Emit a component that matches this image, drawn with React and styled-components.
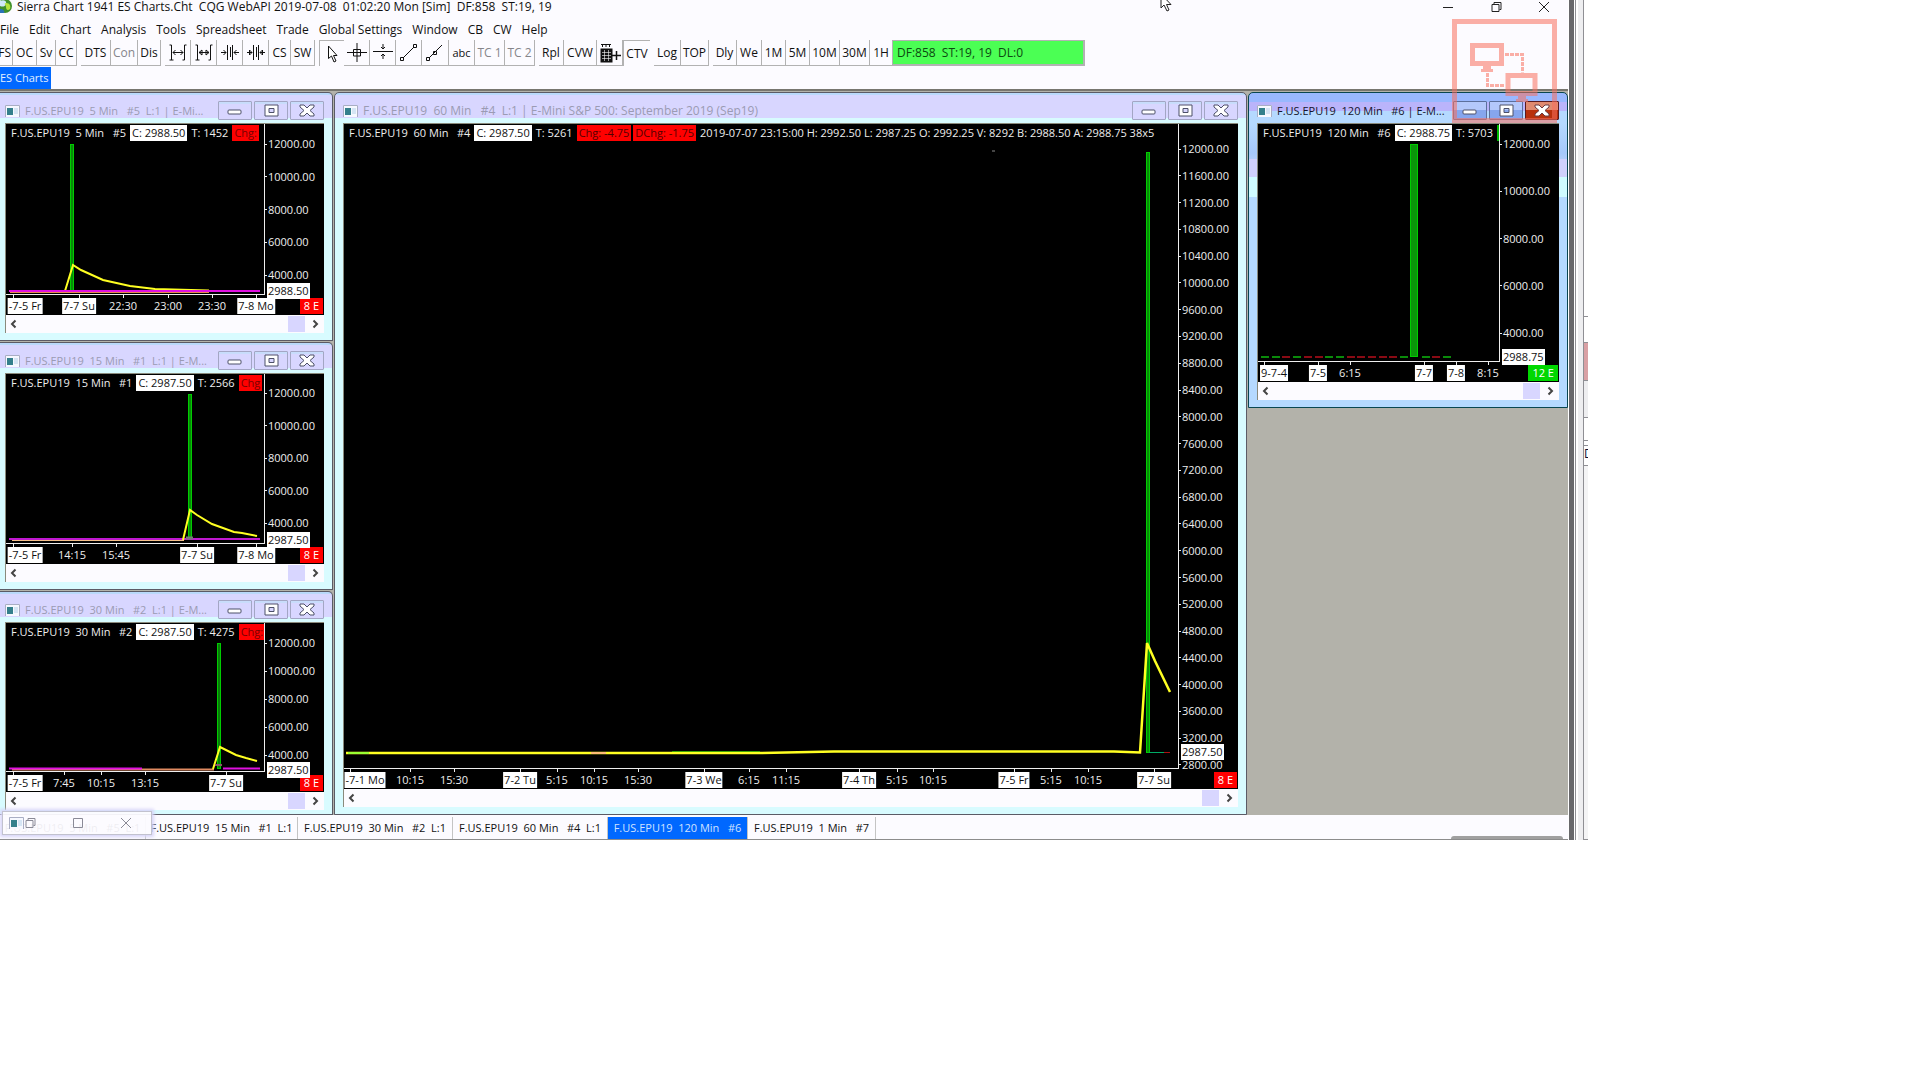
import React from 'react'
import styled, { createGlobalStyle, css } from 'styled-components'

const GlobalStyle = createGlobalStyle`
  * {
    box-sizing: border-box;
  }
  body {
    margin: 0;
    background: #fff;
    color: #111;
    font: 12px/16px 'Open Sans', 'Noto Sans', sans-serif;
  }
  button {
    margin: 0;
    padding: 0;
    border: 0;
    background: none;
    color: inherit;
    font: inherit;
    white-space: pre;
  }
  svg {
    display: block;
    flex: none;
  }
`

const Screen = styled.div`
  display: flex;
  overflow: hidden;
`

const AppWindow = styled.main`
  position: relative;
  flex: 1568 1 0;
  min-width: 0;
  background: #fcfbff;
  border-bottom: 1px solid #8c8c8c;
`

const Blank = styled.div`
  flex: 344 1 0;
`

const TitleBar = styled.header`
  display: flex;
  height: 19px;
  padding-bottom: 5px;
  align-items: center;
  white-space: pre;
`

const AppTitle = styled.h1`
  flex: 1;
  margin: 0 0 0 4px;
  font: inherit;
`

const Caption = styled.button`
  display: flex;
  width: 48px;
  justify-content: center;
`

const Menu = styled.nav`
  display: flex;
  height: 21px;
  align-items: center;
  gap: 10px;
`

const ToolRow = styled.div`
  display: flex;
  height: 27px;
  gap: 4px;
`

const ToolGroup = styled.div`
  display: flex;
  height: 26px;
`

const Tool = styled.button`
  display: flex;
  width: ${p => p.$w}px;
  align-items: center;
  justify-content: center;
  border-right: 1px solid #b2b2b2;
  border-bottom: 1px solid #b2b2b2;
  color: ${p => (p.disabled ? '#85858a' : '#111')};
  ${p => p.$small && css`
    font-size: 11px;
  `}
  ${p => p.$first && css`
    justify-content: flex-end;
    padding-right: 1px;
  `}
  ${p => p.$pressed && css`
    border: 0;
    border-top: 1px solid #b2b2b2;
    border-left: 1px solid #b2b2b2;
  `}
`

const Status = styled.output`
  width: 192px;
  padding: 4px;
  border: solid #b2b2b2;
  border-width: 1px 2px 2px 0;
  background: #4bff54;
  color: #0c4a10;
  white-space: pre;
`

const BookRow = styled.div`
  display: flex;
  height: 22px;
`

const BookTab = styled.button`
  padding: 0 3px 0 0;
  background: #0068ff;
  color: #e4f0ff;
  font-size: 11px;
`

const Workspace = styled.section`
  display: grid;
  grid-template-columns: 333fr 913fr 320fr;
  gap: 1px;
  align-items: start;
  padding-top: 1px;
  border-top: 2px solid #77766f;
  background: #b3b2aa;
`

const Column = styled.div`
  display: grid;
  gap: 1px;
  min-width: 0;
`

const Frame = styled.article`
  min-width: 0;
  padding: 0 8px ${p => p.$foot || 7}px ${p => (p.$cut ? 5 : 8)}px;
  border: 1px solid ${p => (p.$active ? '#0a4650' : '#5b5b66')};
  border-left-width: ${p => (p.$cut ? 0 : 1)}px;
  border-radius: ${p => (p.$cut ? '0 5px 0 0' : '5px 5px 0 0')};
  background: ${p => (p.$active
    ? 'linear-gradient(#99b8ff 9px, #bab4fb 9px 18px, #b5d9ff 18px 30px, #a6c8fa 60px, #b0ccfa 66px, #d0d0fc 66px 84px, #d0fbff 84px 104px, #b5d9ff 104px)'
    : 'linear-gradient(#b9d9fb 2px, #d8d6ff 2px 25px, #d8fbff 25px)')};
`

const FrameTitle = styled.div`
  display: flex;
  height: 31px;
  padding: 8px 0 4px;
  align-items: center;
  gap: 2px;
  color: ${p => (p.$active ? '#15152a' : '#9b9bb3')};
`

const FrameName = styled.h2`
  flex: 1;
  min-width: 0;
  margin: 0 0 0 3px;
  overflow: hidden;
  font: inherit;
  font-size: ${p => (p.$small ? 11 : 12)}px;
  white-space: pre;
`

const FrameButton = styled.button`
  display: flex;
  flex: none;
  width: 34px;
  height: 19px;
  align-items: center;
  justify-content: center;
  border: 1px solid ${p => (p.$close ? '#5a1a20' : p.$active ? '#5c6f9c' : '#a3a6c4')};
  border-radius: 1px;
  background: ${p => (p.$close
    ? 'linear-gradient(#e08a70 8px, #b8300c 8px)'
    : p.$active
      ? 'linear-gradient(#b4c8fb 8px, #86a6ee 8px)'
      : 'linear-gradient(#c8dcfb 2px, #d8d6ff 2px)')};
`

const Client = styled.div`
  border-top: 1px solid #8a8a7c;
  border-left: 1px solid #8a8a7c;
  margin-top: -1px;
  background: #000;
  color: #eee;
  font-size: 11px;
`

const Plot = styled.div`
  display: grid;
  grid-template-columns: minmax(0, 1fr) 60px;
  height: ${p => p.$h}px;
`

const Canvas = styled.div`
  display: flex;
  min-width: 0;
  flex-direction: column;
  border-bottom: 1px solid #eee;
  svg {
    flex: 1;
    width: 100%;
    min-height: 0;
  }
`

const Quote = styled.div`
  display: flex;
  height: 20px;
  padding: 1px 0 3px 3px;
  overflow: hidden;
  white-space: pre;
`

const Tag = styled.span`
  flex: none;
  margin-right: 2px;
  padding: 0 2px;
  background: ${p => p.$bg || 'none'};
  color: ${p => p.$fg || 'inherit'};
`

const PriceAxis = styled.div`
  position: relative;
  height: 100%;
  min-height: 0;
  border-left: 1px solid #eee;
`

const PriceClip = styled.div`
  height: 100%;
  overflow: hidden;
`

const PriceList = styled.ol`
  display: flex;
  height: calc(100% + ${p => p.$over || 0}px);
  margin: 0;
  padding: ${p => p.$top}px 0 ${p => p.$bottom || 0}px;
  flex-direction: column;
  justify-content: space-between;
  list-style: none;
  li {
    display: flex;
    align-items: center;
    gap: 1px;
  }
  li::before {
    content: '';
    width: 2px;
    height: 1px;
    background: #eee;
  }
`

const LastPrice = styled.output`
  position: absolute;
  z-index: 1;
  bottom: ${p => p.$bottom}px;
  left: 2px;
  padding: 0 1px;
  background: #fff;
  color: #111;
`

const TimeAxis = styled.div`
  position: relative;
  display: flex;
  height: 20px;
  justify-content: flex-end;
  padding: 3px 1px 1px 0;
  overflow: hidden;
  white-space: pre;
`

const Time = styled.span`
  position: absolute;
  top: 3px;
  padding: 0 1px;
  background: ${p => (p.$day ? '#fff' : 'none')};
  color: ${p => (p.$day ? '#111' : 'inherit')};
  transform: translateX(-50%);
`

const Tick = styled.i`
  position: absolute;
  top: 0;
  width: 1px;
  height: 3px;
  background: #eee;
`

const Count = styled.span`
  padding: 0 4px;
  background: ${p => p.$bg};
  color: #fff;
`

const Scroll = styled.div`
  display: flex;
  height: 18px;
  padding: 1px 5px 1px 4px;
  align-items: center;
  background: #fcfbff;
`

const Thumb = styled.div`
  width: 17px;
  height: 16px;
  margin: 0 7px 0 auto;
  background: #d8d6ff;
`

const Bottom = styled.footer`
  position: relative;
  display: flex;
  height: 24px;
  padding-top: 2px;
`

const ChartTab = styled.button`
  width: ${p => p.$w}px;
  border-right: 1px solid #c4c4c4;
  background: ${p => (p.$on ? '#0068ff' : 'none')};
  color: ${p => (p.$on ? '#cfe2ff' : '#111')};
  font-size: 11px;
`

const Minimized = styled.div`
  position: absolute;
  top: -4px;
  left: 2px;
  display: flex;
  width: 150px;
  height: 24px;
  align-items: center;
  padding-left: 6px;
  border: 1px solid #c2c2ce;
  background: rgba(252, 251, 255, 0.94);
  box-shadow: 0 0 3px 2px #d8d6f8;
`

const MiniButton = styled.button`
  display: flex;
  width: 48px;
  justify-content: center;
  &:first-of-type {
    width: 12px;
    margin-right: 18px;
  }
`

const Grip = styled.div`
  position: absolute;
  right: 5px;
  bottom: 0;
  width: 112px;
  height: 3px;
  border-radius: 6px 6px 0 0;
  background: #a0a0a0;
`

const Share = styled.svg`
  position: absolute;
  z-index: 2;
  top: 19px;
  right: 11px;
  pointer-events: none;
`

const Pointer = styled.svg`
  position: absolute;
  top: -7px;
  left: 74%;
`

const Edge = styled.aside`
  display: grid;
  width: 20px;
  grid-template-columns: 1px 5px 1px 1px 2px 5px 5px;
`

const Strip = styled.div`
  background: ${p => p.$bg};
`

const Slices = styled.div`
  display: flex;
  flex-direction: column;
  border-left: 1px solid #8f8f94;
  overflow: hidden;
`

const Slice = styled.div`
  height: ${p => p.$h}px;
  flex: ${p => (p.$h ? 'none' : 1)};
  background: ${p => p.$bg || '#fff'};
  border-bottom: 1px solid #8f8f94;
  color: #113;
  font-size: 12px;
`

const Globe = () => (
  <svg width="13" height="14" viewBox="0 0 13 14" aria-hidden="true">
    <circle cx="5" cy="6" r="7" fill="#3f8f2c" />
    <path d="M0 1c4-2 7 0 6 3s-4 3-6 2z" fill="#cfe8f8" />
    <path d="M6 3c4 0 5 3 4 6-2 2-4 1-4-2s-3-3 0-4z" fill="#b4e23c" />
    <path d="M0 9c3 0 5 2 4 4H0z" fill="#2a72b8" />
  </svg>
)

const ChartIcon = () => (
  <svg width="15" height="12" viewBox="0 0 15 12" aria-hidden="true">
    <rect width="15" height="12" fill="#f6f8ff" />
    <path d="M.5 12V.5H14.5V12" fill="none" stroke="#a9aec4" />
    <rect x="2" y="3" width="6" height="7" fill="#34808c" />
    <path d="M9 4h4M9 6h4M9 8h4" stroke="#b4d2ea" />
  </svg>
)

const glyphs = {
  min: <rect x="1" y="7" width="13" height="4" rx="1" />,
  max: <path d="M2 2h13v11H2zM6 5.500h5v4H6z" fillRule="evenodd" />,
  close: <path d="M1 2h4l3 3 3-3h4v2l-4 3.500 4 3.500v2h-4l-3-3-3 3H1v-2l4-3.500L1 4z" />
}

const FrameGlyph = ({ kind, light }) => (
  <svg width="16" height="15" viewBox="0 0 16 15" fill="#fff" stroke={light ? '#6d3a40' : '#4c5068'} aria-hidden="true">
    {glyphs[kind]}
  </svg>
)

const Chevron = ({ back }) => (
  <svg width="7" height="10" viewBox="0 0 7 10" fill="none" stroke="#444" strokeWidth="2" aria-hidden="true">
    <path d={back ? 'M5.500 1.500 2 5l3.500 3.500' : 'M1.500 1.500 5 5 1.500 8.500'} />
  </svg>
)

const captionPaths = {
  Minimize: 'M1 6.500h10',
  Restore: 'M2 3.500h7v7H2zM4 3V1.500h7v7H9.500',
  Maximize: 'M1.500 1.500h9v9h-9z',
  Close: 'M1 1l10 10M11 1 1 11'
}

const CaptionIcon = ({ kind, color = '#222' }) => (
  <svg width="12" height="12" viewBox="0 0 12 12" fill="none" stroke={color} aria-hidden="true">
    <path d={captionPaths[kind]} />
  </svg>
)

const toolPaths = {
  widen: <path d="M3.500 4v15M1.500 19h4M16.500 4v15M14.500 19h2M5 11.500h10M7.500 9 5 11.500 7.500 14M12.500 9l2.500 2.500-2.500 2.500M1.500 4h2M16.500 4h2" />,
  widenBold: <path d="M3.500 4v15M1.500 19h4M16.500 4v15M14.500 19h2M1.500 4h2M16.500 4h2M5 11.500h10M8 9v5l-3-2.500zM12 9v5l3-2.500z" />,
  narrow: <path d="M7.500 4v15M12.500 4v15M10.500 6v10M1 11.500h5M3.500 9 6 11.500 3.500 14M19 11.500h-5M16.500 9 14 11.500l2.500 2.500" />,
  narrowBold: <path d="M7.500 4v15M12.500 4v15M10.500 6v10M1 11.500h5M3.500 9v5L6 11.500zM19 11.500h-5M16.500 9v5L14 11.500z" />,
  cursor: <path d="M6.500 4v12.500l3-2.500 2.500 6 2-1-2.500-5.500h3.500z" fill="#fff" />,
  cross: <path d="M0 11.500h20M10 2v19M6.500 8.500h7v6.500h-7z" />,
  level: <path d="M0 10.500h20M10 3v5M8 6l2 2 2-2M10 18v-5M8 15l2-2 2 2" />,
  line: <path d="M4 17 15 6M1.500 16.500h3v3h-3zM14.500 3.500h3v3h-3z" />,
  ray: <path d="M4 17 17 4M1.500 16.500h3v3h-3zM8.500 10.500h3v3h-3z" />
}

const ToolIcon = ({ kind }) => (
  <svg width="20" height="23" viewBox="0 0 20 23" fill="none" stroke="#111" aria-hidden="true">
    {toolPaths[kind]}
  </svg>
)

const GridIcon = () => (
  <svg width="22" height="22" viewBox="0 0 22 22" fill="none" stroke="#111" aria-hidden="true">
    <path d="M2 2.500h10M3.500 2v3M7 2v3M10.500 2v3" />
    <rect x="2" y="7" width="11" height="13" fill="#111" />
    <path d="M3 10.500h9M3 13.500h9M3 16.500h9M5.500 8v11M9.500 8v11" stroke="#fff" strokeWidth=".6" />
    <path d="M13 13.500h9M17.500 9v9" strokeWidth="1.500" />
  </svg>
)

const toolGroups = [
  [['FS', 13], ['OC', 24], ['Sv', 19], ['CC', 21]],
  [['DTS', 30], ['Con', 27, { disabled: true }], ['Dis', 23]],
  [['widen', 26], ['widenBold', 26], ['narrow', 26], ['narrowBold', 26], ['CS', 22], ['SW', 24]],
  [
    ['cursor', 25, { $pressed: true }], ['cross', 26], ['level', 26], ['line', 26], ['ray', 27],
    ['abc', 26, { $small: true }], ['TC 1', 30, { disabled: true }], ['TC 2', 30, { disabled: true }]
  ],
  [['Rpl', 25], ['CVW', 33], ['grid', 26], ['CTV', 27, { $pressed: true }]],
  [['Log', 27], ['TOP', 28]],
  [['Dly', 24], ['We', 25], ['1M', 24], ['5M', 24], ['10M', 30], ['30M', 30], ['1H', 23]]
]

const menus = ['File', 'Edit', 'Chart', 'Analysis', 'Tools', 'Spreadsheet', 'Trade', 'Global Settings', 'Window', 'CB', 'CW', 'Help']

const RED = '#f00'
const prices = (from, to, step) => {
  const list = []
  for (let p = from; p >= to; p -= step) list.push(`${p}.00`)
  return list
}

// x positions on the time axis are in the units of `width`
const charts = {
  min5: {
    title: 'F.US.EPU19  5 Min   #5  L:1 | E-Mi...',
    cut: true,
    height: 171,
    width: 318,
    quote: [['F.US.EPU19  5 Min   #5'], ['C: 2988.50', '#fff', '#111'], ['T: 1452'], ['Chg:', RED, '#700']],
    prices: prices(12000, 4000, 2000),
    top: 12,
    bottom: 12,
    last: ['2988.50', -4],
    times: [['-7-5 Fr', 19, true, 7], ['7-7 Su', 73, true], ['22:30', 117], ['23:00', 162], ['23:30', 206], ['7-8 Mo', 250, true]],
    count: ['8 E', RED],
    plot: (
      <svg viewBox="0 0 258 150" preserveAspectRatio="none">
        <path d="M4 148.500H203" stroke="#e88a4a" />
        <rect x="64.500" y="0.500" width="3" height="147" fill="#088a08" stroke="#0c0" />
        <path d="M59 147 67 121 75 126 97 136 124 142 149 145 203 146.500" fill="none" stroke="#ff2" strokeWidth="2" />
        <path d="M3 147H254" stroke="#e010e0" strokeWidth="2" />
      </svg>
    )
  },
  min15: {
    title: 'F.US.EPU19  15 Min   #1  L:1 | E-M...',
    cut: true,
    height: 170,
    width: 318,
    quote: [['F.US.EPU19  15 Min   #1'], ['C: 2987.50', '#fff', '#111'], ['T: 2566'], ['Chg', RED, '#700']],
    prices: prices(12000, 4000, 2000),
    top: 11,
    bottom: 13,
    last: ['2987.50', -4],
    times: [['-7-5 Fr', 19, true, 7], ['14:15', 66], ['15:45', 110], ['7-7 Su', 191, true], ['7-8 Mo', 250, true]],
    count: ['8 E', RED],
    plot: (
      <svg viewBox="0 0 258 149" preserveAspectRatio="none">
        <path d="M6 146H178" stroke="#f5c08a" strokeWidth="2" />
        <rect x="182.500" y="0.500" width="3" height="145" fill="#088a08" stroke="#0c0" />
        <path d="M3 145H254" stroke="#c018d0" strokeWidth="2" />
        <path d="M177 146 184 116 191 121 206 130 228 138 236 139 251 142" fill="none" stroke="#ff2" strokeWidth="2" />
        <path d="M180 144H187" stroke="#777" strokeWidth="3" />
      </svg>
    )
  },
  min30: {
    title: 'F.US.EPU19  30 Min   #2  L:1 | E-M...',
    cut: true,
    foot: 4,
    height: 149,
    width: 318,
    quote: [['F.US.EPU19  30 Min   #2'], ['C: 2987.50', '#fff', '#111'], ['T: 4275'], ['Chg:', RED, '#700']],
    prices: prices(12000, 4000, 2000),
    top: 12,
    bottom: 9,
    last: ['2987.50', -6],
    times: [['-7-5 Fr', 19, true, 7], ['7:45', 58], ['10:15', 95], ['13:15', 139], ['7-7 Su', 220, true]],
    count: ['8 E', RED],
    plot: (
      <svg viewBox="0 0 258 128" preserveAspectRatio="none">
        <path d="M6 126.500H208" stroke="#e08a60" strokeWidth="2" />
        <rect x="211.500" y="0.500" width="3" height="125" fill="#0a7a0a" stroke="#0c0" />
        <path d="M3 125.500H136M217 125.500H254" stroke="#e010e0" strokeWidth="2" />
        <path d="M207 126 214 104 230 112 240 115 251 118" fill="none" stroke="#ff2" strokeWidth="2" />
        <path d="M209 122H216" stroke="#856" strokeWidth="2" />
      </svg>
    )
  },
  min60: {
    title: 'F.US.EPU19  60 Min   #4  L:1 | E-Mini S&P 500: September 2019 (Sep19)',
    height: 645,
    width: 894,
    quote: [
      ['F.US.EPU19  60 Min   #4'], ['C: 2987.50', '#fff', '#111'], ['T: 5261'], ['Chg: -4.75', RED, '#500'], ['DChg: -1.75', RED, '#500'],
      ['2019-07-07 23:15:00 H: 2992.50 L: 2987.25 O: 2992.25 V: 8292 B: 2988.50 A: 2988.75 38x5']
    ],
    prices: prices(12000, 2800, 400),
    top: 17,
    over: 4,
    last: ['2987.50', 9],
    times: [
      ['-7-1 Mo', 21, true, 6], ['10:15', 66], ['15:30', 110], ['7-2 Tu', 176, true], ['5:15', 213], ['10:15', 250],
      ['15:30', 294], ['7-3 We', 360, true], ['6:15', 405], ['11:15', 442], ['7-4 Th', 515, true], ['5:15', 553],
      ['10:15', 589], ['7-5 Fr', 670, true], ['5:15', 707], ['10:15', 744], ['7-7 Su', 810, true]
    ],
    count: ['8 E', RED],
    plot: (
      <svg viewBox="0 0 834 624" preserveAspectRatio="none">
        <path d="M648 7h3" stroke="#888" />
        <path d="M328 607.500H416" stroke="#080" />
        <rect x="802.500" y="8.500" width="3" height="600" fill="#088a08" stroke="#0c0" />
        <path d="M805 608.500H824" stroke="#0a6" />
        <path d="M820 608.500H826" stroke="#a11" />
        <path d="M2 609H416L490 607.500H770L796 608.500 803 499 811 517 826 548" fill="none" stroke="#ff2" strokeWidth="2.500" />
        <path d="M4 609H25" stroke="#9f3" strokeWidth="2" />
        <path d="M247 609H262" stroke="#fb7" strokeWidth="2" />
      </svg>
    )
  },
  min120: {
    title: 'F.US.EPU19  120 Min   #6 | E-M...',
    active: true,
    height: 238,
    width: 301,
    quote: [['F.US.EPU19  120 Min   #6'], ['C: 2988.75', '#fff', '#111'], ['T: 5703'], ['', '#0b0']],
    prices: prices(12000, 4000, 2000),
    top: 12,
    bottom: 21,
    last: ['2988.75', -3],
    times: [['9-7-4', 16, true, 6], ['7-5', 60, true], ['6:15', 92], ['7-7', 166, true], ['7-8', 198, true], ['8:15', 230]],
    count: ['12 E', '#00d800'],
    plot: (
      <svg viewBox="0 0 241 217" preserveAspectRatio="none">
        {[...'GGRGRRGGRRRRRG GRG'].map((c, i) => c !== ' ' && (
          <path key={i} d={`M${3 + Math.round(i * 10.7)} 213h8`} stroke={c === 'G' ? '#0a8a0a' : '#8a0a14'} strokeWidth="2" />
        ))}
        <rect x="152.500" y="0.500" width="7" height="212" fill="#0a960a" stroke="#0c0" />
      </svg>
    )
  }
}

function ChartWindow({ chart }) {
  const { title, cut, foot, active, height, width, quote, top, bottom, over, last, times, count, plot } = chart
  const at = x => ({ left: `${(x / width) * 100}%` })
  return (
    <Frame $cut={cut} $active={active} $foot={foot}>
      <FrameTitle $active={active}>
        <ChartIcon />
        <FrameName $small={cut || active}>{title}</FrameName>
        <FrameButton $active={active} aria-label="Minimize"><FrameGlyph kind="min" /></FrameButton>
        <FrameButton $active={active} aria-label="Maximize"><FrameGlyph kind="max" /></FrameButton>
        <FrameButton $close={active} aria-label="Close"><FrameGlyph kind="close" light={active} /></FrameButton>
      </FrameTitle>
      <Client>
        <Plot $h={height}>
          <Canvas>
            <Quote>
              {quote.map(([text, bg, fg]) => <Tag key={text} $bg={bg} $fg={fg}>{text}</Tag>)}
            </Quote>
            {plot}
          </Canvas>
          <PriceAxis>
            <PriceClip>
              <PriceList $top={top} $bottom={bottom} $over={over}>
                {chart.prices.map(p => <li key={p}>{p}</li>)}
              </PriceList>
            </PriceClip>
            <LastPrice $bottom={last[1]}>{last[0]}</LastPrice>
          </PriceAxis>
        </Plot>
        <TimeAxis>
          {times.map(([text, x, day, tick]) => (
            <React.Fragment key={x}>
              <Tick style={at(tick || x)} />
              <Time $day={day} style={at(x)}>{text}</Time>
            </React.Fragment>
          ))}
          <Count $bg={count[1]}>{count[0]}</Count>
        </TimeAxis>
        <Scroll>
          <button aria-label="Scroll left"><Chevron back /></button>
          <Thumb />
          <button aria-label="Scroll right"><Chevron /></button>
        </Scroll>
      </Client>
    </Frame>
  )
}

function ToolContent({ name }) {
  if (name === 'grid') return <GridIcon />
  return toolPaths[name] ? <ToolIcon kind={name} /> : name
}

function App() {
  return (
    <>
      <GlobalStyle />
      <Screen>
        <AppWindow>
          <TitleBar>
            <Globe />
            <AppTitle>Sierra Chart 1941 ES Charts.Cht  CQG WebAPI 2019-07-08  01:02:20 Mon [Sim]  DF:858  ST:19, 19</AppTitle>
            {['Minimize', 'Restore', 'Close'].map(kind => (
              <Caption key={kind} aria-label={kind}><CaptionIcon kind={kind} /></Caption>
            ))}
          </TitleBar>
          <Pointer width="12" height="19" viewBox="0 0 12 19" fill="#fff" stroke="#222" aria-hidden="true">
            <path d="M1 1v14l3-3 3 6 2-1-2.500-5.500H11z" />
          </Pointer>
          <Menu>
            {menus.map(name => <button key={name}>{name}</button>)}
          </Menu>
          <ToolRow>
            {toolGroups.map((group, i) => (
              <ToolGroup key={i}>
                {group.map(([name, w, rest]) => (
                  <Tool key={name} $w={w} $first={name === 'FS'} aria-label={name} {...rest}>
                    <ToolContent name={name} />
                  </Tool>
                ))}
                {i === toolGroups.length - 1 && <Status>DF:858  ST:19, 19  DL:0</Status>}
              </ToolGroup>
            ))}
          </ToolRow>
          <BookRow>
            <BookTab>ES Charts</BookTab>
          </BookRow>
          <Workspace>
            <Column>
              <ChartWindow chart={charts.min5} />
              <ChartWindow chart={charts.min15} />
              <ChartWindow chart={charts.min30} />
            </Column>
            <ChartWindow chart={charts.min60} />
            <ChartWindow chart={charts.min120} />
          </Workspace>
          <Bottom>
            <ChartTab $w={146}>F.US.EPU19  5 Min   #5  L:1</ChartTab>
            <ChartTab $w={152}>F.US.EPU19  15 Min   #1  L:1</ChartTab>
            <ChartTab $w={155}>F.US.EPU19  30 Min   #2  L:1</ChartTab>
            <ChartTab $w={155}>F.US.EPU19  60 Min   #4  L:1</ChartTab>
            <ChartTab $w={140} $on>F.US.EPU19  120 Min   #6</ChartTab>
            <ChartTab $w={128}>F.US.EPU19  1 Min   #7</ChartTab>
            <Minimized>
              <ChartIcon />
              {['Restore', 'Maximize', 'Close'].map(kind => (
                <MiniButton key={kind} aria-label={kind}><CaptionIcon kind={kind} color="#8a8a96" /></MiniButton>
              ))}
            </Minimized>
            <Grip />
          </Bottom>
          <Share width="105" height="104" viewBox="0 0 105 104" fill="none" stroke="#f8705c" strokeOpacity=".55" aria-hidden="true">
            <path d="M2.500 2.500h100v99h-100z" strokeWidth="5" />
            <path d="M20.500 26.500h29v18h-29zM56 56.500h27v18H56z" strokeWidth="5" />
            <path d="M31 48.500h8M29 51.500h12M66 78.500h8M64 81.500h12" strokeWidth="3" />
            <path d="M53 35.500h17.500v18M35.500 54v12.500H53" strokeWidth="3" strokeDasharray="4 1" />
          </Share>
        </AppWindow>
        <Edge>
          <Strip $bg="#fff" />
          <Strip $bg="#68686b" />
          <Strip $bg="#fff" />
          <Strip $bg="#8f8f94" />
          <Strip $bg="#fff" />
          <Strip $bg="#eeeef0" />
          <Slices>
            <Slice $h={317} />
            <Slice $h={26} />
            <Slice $h={38} $bg="#d9a0a4" />
            <Slice $h={37} $bg="#eeeef0" />
            <Slice $h={23} />
            <Slice $h={5} />
            <Slice $h={20}>D</Slice>
            <Slice $bg="#f4f4f5" />
          </Slices>
        </Edge>
        <Blank />
      </Screen>
    </>
  )
}

export default App
